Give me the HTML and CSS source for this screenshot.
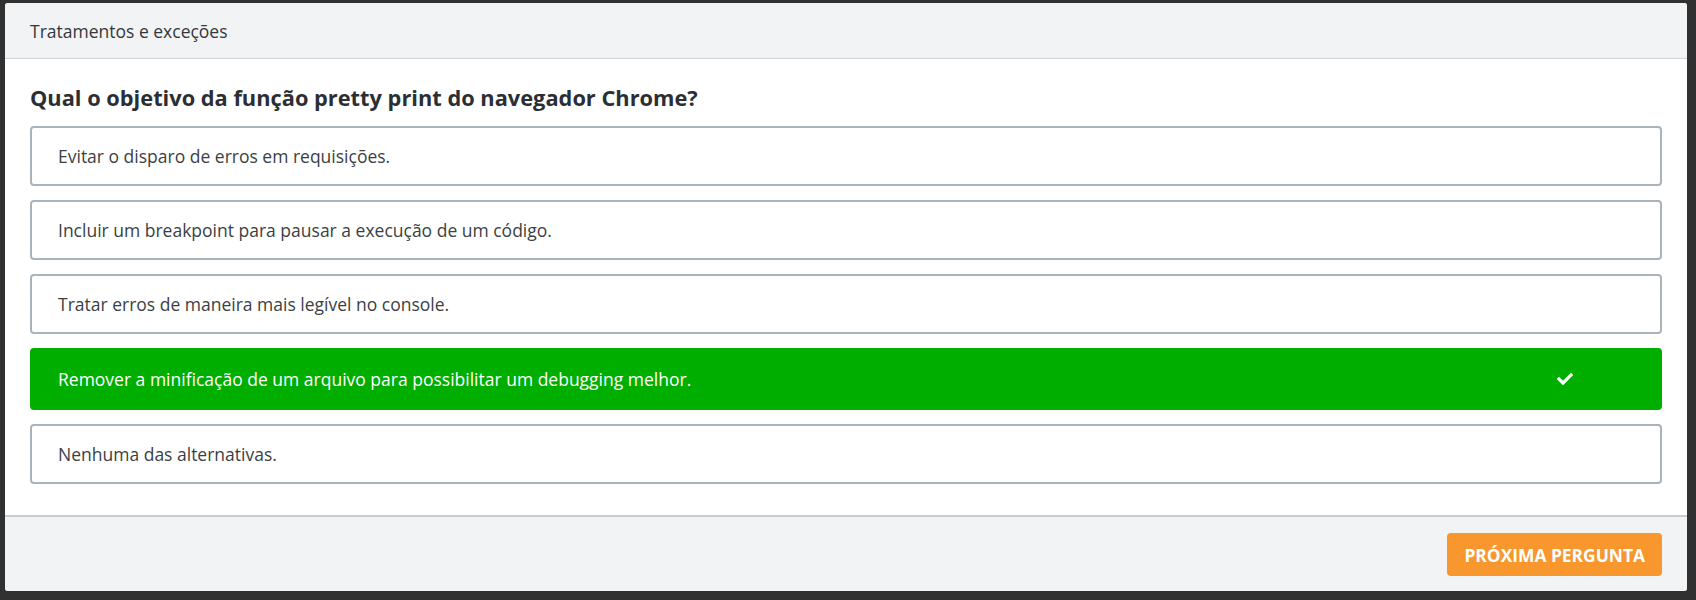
FILE: index.html
```html
<!DOCTYPE html>
<html lang="pt-BR">
<head>
<meta charset="utf-8">
<title>Tratamentos e exceções</title>
<link rel="stylesheet" href="styles.css">
</head>
<body>
<div class="card">
  <div class="card-header">Tratamentos e exceções</div>
  <div class="card-body">
    <h2 class="question">Qual o objetivo da função pretty print do navegador Chrome?</h2>
    <ul class="options">
      <li class="option">Evitar o disparo de erros em requisições.</li>
      <li class="option">Incluir um breakpoint para pausar a execução de um código.</li>
      <li class="option">Tratar erros de maneira mais legível no console.</li>
      <li class="option correct">
        <span class="option-text">Remover a minificação de um arquivo para possibilitar um debugging melhor.</span>
        <svg class="check" viewBox="0 0 512 512" width="16" height="16" aria-hidden="true"><path fill="#fff" d="M173.898 439.404l-166.4-166.4c-9.997-9.997-9.997-26.206 0-36.204l36.203-36.204c9.997-9.998 26.207-9.998 36.204 0L192 312.69 432.095 72.596c9.997-9.997 26.207-9.997 36.204 0l36.203 36.204c9.997 9.997 9.997 26.206 0 36.204l-294.4 294.401c-9.998 9.997-26.207 9.997-36.204-.001z"/></svg>
      </li>
      <li class="option">Nenhuma das alternativas.</li>
    </ul>
  </div>
  <div class="card-footer">
    <button class="btn-next" type="button">Próxima pergunta</button>
  </div>
</div>
</body>
</html>
```

FILE: styles.css
```css
* { box-sizing: border-box; }

html, body {
  margin: 0;
  background: #313131;
}

body {
  padding: 3px 9px 9px 5px;
  font-family: "Open Sans", "Noto Sans", sans-serif;
  color: #373b40;
}

.card {
  background: #fff;
  border-radius: 3px;
  overflow: hidden;
  height: 588px;
  display: flex;
  flex-direction: column;
}

.card-header {
  background: #f2f3f5;
  border-bottom: 1px solid #cfd2d6;
  padding: 16px 25px 15px;
  font-size: 17.5px;
  line-height: 24px;
  color: #34383d;
}

.card-body {
  flex: 1;
  padding: 24px 25px 0;
}

.question {
  margin: 0 0 13px;
  font-size: 21.8px;
  line-height: 30px;
  font-weight: 700;
  color: #2b2f34;
}

.options {
  list-style: none;
  margin: 0;
  padding: 0;
  display: flex;
  flex-direction: column;
  gap: 14px;
}

.option {
  border: 2px solid #aab2ba;
  border-radius: 4px;
  padding: 16px 26px;
  font-size: 17.5px;
  line-height: 24px;
  color: #3b3f44;
}

.option.correct {
  display: flex;
  align-items: center;
  justify-content: space-between;
  background: #00ae00;
  border-color: #00ae00;
  color: #fff;
  padding: 17px 87px 17px 26px;
}

.check {
  flex: none;
}

.card-footer {
  background: #f2f3f5;
  border-top: 2px solid #c9ccd0;
  padding: 16px 25px 15px;
  display: flex;
  justify-content: flex-end;
}

.btn-next {
  background: #f8972d;
  color: #fff;
  border: 0;
  border-radius: 4px;
  height: 43px;
  padding: 0 17px;
  font-family: "Open Sans", "Noto Sans", sans-serif;
  font-size: 17.4px;
  font-weight: 700;
  text-transform: uppercase;
  cursor: pointer;
}
```
